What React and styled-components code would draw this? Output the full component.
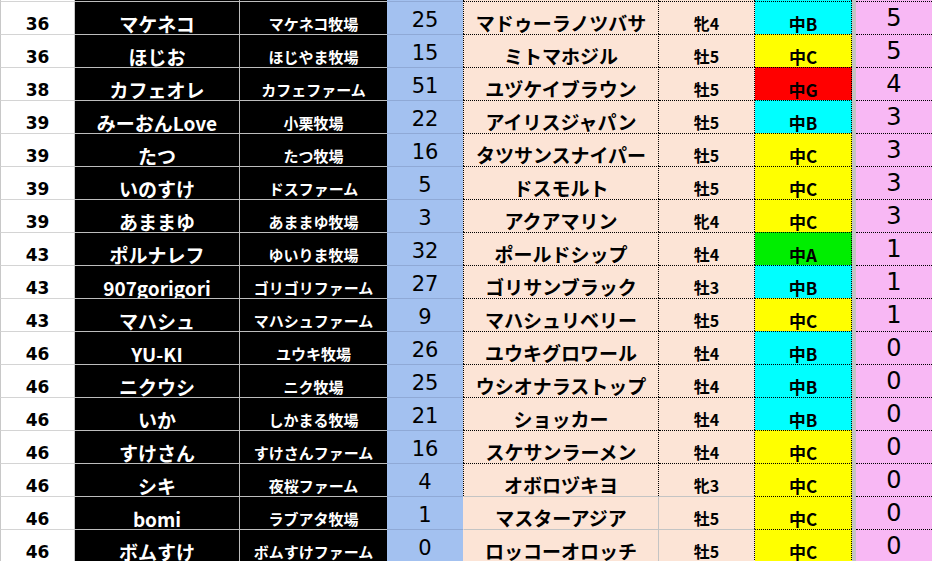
import React from 'react'
import styled, { createGlobalStyle, css } from 'styled-components'

const GlobalStyle = createGlobalStyle`
  html, body {
    margin: 0;
    padding: 0;
    background: #fff;
    overflow: hidden;
  }
`

const JP = `"Noto Sans CJK JP", "Noto Sans", sans-serif`
const NUM = `"DejaVu Sans", "Liberation Sans", sans-serif`

const gradeColors = {
  A: '#00ee00',
  B: '#00ffff',
  C: '#ffff00',
  G: '#ff0000',
}

// first entry is the sliver of the row above the visible area
const rows = [
  { rank: '', name: '', farm: '', count: '', horse: '', sex: '', grade: 'B', pts: '' },
  { rank: 36, name: 'マケネコ', farm: 'マケネコ牧場', count: 25, horse: 'マドゥーラノツバサ', sex: '牝4', grade: 'B', pts: 5 },
  { rank: 36, name: 'ほじお', farm: 'ほじやま牧場', count: 15, horse: 'ミトマホジル', sex: '牡5', grade: 'C', pts: 5 },
  { rank: 38, name: 'カフェオレ', farm: 'カフェファーム', count: 51, horse: 'ユヅケイブラウン', sex: '牡5', grade: 'G', pts: 4 },
  { rank: 39, name: 'みーおんLove', farm: '小栗牧場', count: 22, horse: 'アイリスジャパン', sex: '牡5', grade: 'B', pts: 3 },
  { rank: 39, name: 'たつ', farm: 'たつ牧場', count: 16, horse: 'タツサンスナイパー', sex: '牡5', grade: 'C', pts: 3 },
  { rank: 39, name: 'いのすけ', farm: 'ドスファーム', count: 5, horse: 'ドスモルト', sex: '牡5', grade: 'C', pts: 3 },
  { rank: 39, name: 'あままゆ', farm: 'あままゆ牧場', count: 3, horse: 'アクアマリン', sex: '牝4', grade: 'C', pts: 3 },
  { rank: 43, name: 'ポルナレフ', farm: 'ゆいりま牧場', count: 32, horse: 'ポールドシップ', sex: '牡4', grade: 'A', pts: 1 },
  { rank: 43, name: '907gorigori', farm: 'ゴリゴリファーム', count: 27, horse: 'ゴリサンブラック', sex: '牡3', grade: 'B', pts: 1 },
  { rank: 43, name: 'マハシュ', farm: 'マハシュファーム', count: 9, horse: 'マハシュリベリー', sex: '牡5', grade: 'C', pts: 1 },
  { rank: 46, name: 'YU-KI', farm: 'ユウキ牧場', count: 26, horse: 'ユウキグロワール', sex: '牡4', grade: 'B', pts: 0 },
  { rank: 46, name: 'ニクウシ', farm: 'ニク牧場', count: 25, horse: 'ウシオナラストップ', sex: '牡4', grade: 'B', pts: 0 },
  { rank: 46, name: 'いか', farm: 'しかまる牧場', count: 21, horse: 'ショッカー', sex: '牡4', grade: 'B', pts: 0 },
  { rank: 46, name: 'すけさん', farm: 'すけさんファーム', count: 16, horse: 'スケサンラーメン', sex: '牡4', grade: 'C', pts: 0 },
  { rank: 46, name: 'シキ', farm: '夜桜ファーム', count: 4, horse: 'オボロヅキヨ', sex: '牝3', grade: 'C', pts: 0 },
  { rank: 46, name: 'bomi', farm: 'ラブアタ牧場', count: 1, horse: 'マスターアジア', sex: '牡5', grade: 'C', pts: 0, plain: true },
  { rank: 46, name: 'ボムすけ', farm: 'ボムすけファーム', count: 0, horse: 'ロッコーオロッチ', sex: '牡5', grade: 'C', pts: 0, plain: true },
]

const Sheet = styled.div`
  display: flex;
  flex-direction: column;
  margin-top: -32px;
`

const Row = styled.div`
  display: grid;
  grid-template-columns: 75px 165px 147px 76px 196px 96px 97px 4px 76px;
  grid-template-rows: 33px;
  height: 33px;
  flex: none;
`

const cell = css`
  box-sizing: border-box;
  min-height: 0;
  display: flex;
  align-items: center;
  justify-content: center;
  white-space: nowrap;
  line-height: 1;
  border-top: 1px solid transparent;
`

const RankCell = styled.div`
  ${cell};
  background: #fff;
  border-top-color: #d4d4d4;
  border-left: 1px solid #c8c8c8;
  border-right: 1px solid #c8c8c8;
  padding-top: 11px;
  font: 700 17px ${NUM};
  color: #000;
`

const NameCell = styled.div`
  ${cell};
  background: #000;
  border-top-color: #bdbdbd;
  border-right: 1px solid #bdbdbd;
  padding-top: 10px;
  font: 700 19px ${JP};
  color: #fff;
`

const FarmCell = styled.div`
  ${cell};
  background: #000;
  border-top-color: #bdbdbd;
  padding-top: 10px;
  font: 700 15px ${JP};
  color: #fff;
`

const CountCell = styled.div`
  ${cell};
  background: #a3c1f0;
  border-top-color: #8fa9d6;
  padding-top: 3px;
  font: 400 21px ${NUM};
  color: #000;
`

const peachBorders = css`
  border-top: ${(p) => (p.$plain ? '1px solid #c4c4c4' : '1px dotted #000')};
`

const HorseCell = styled.div`
  ${cell};
  ${peachBorders};
  background: #fce4d6;
  border-left: ${(p) => (p.$plain ? '1px solid transparent' : '1px dotted #000')};
  border-right: ${(p) => (p.$plain ? '1px solid #c4c4c4' : '1px dotted #000')};
  padding-top: 8px;
  font: 700 19px ${JP};
  color: #000;
`

const SexCell = styled.div`
  ${cell};
  ${peachBorders};
  background: #fce4d6;
  border-right: 1px dotted #000;
  padding-top: 9px;
  font: 700 16px ${JP};
  color: #000;
`

const GradeCell = styled.div`
  ${cell};
  background: ${(p) => gradeColors[p.$grade]};
  border-top: 1px dotted #000;
  border-right: 1px dotted #000;
  padding-top: 10px;
  font: 700 17px ${JP};
  color: #000;
`

const Divider = styled.div`
  background: #c4c4c4;
`

const PointCell = styled.div`
  ${cell};
  background: #f8b8f4;
  border-top: 1px dotted #000;
  padding-top: 0;
  font: 400 24px ${NUM};
  color: #000;
`

export default function App() {
  return (
    <>
      <GlobalStyle />
      <Sheet>
        {rows.map((r, i) => (
          <Row key={i}>
            <RankCell>{r.rank}</RankCell>
            <NameCell>{r.name}</NameCell>
            <FarmCell>{r.farm}</FarmCell>
            <CountCell>{r.count}</CountCell>
            <HorseCell $plain={r.plain}>{r.horse}</HorseCell>
            <SexCell $plain={r.plain}>{r.sex}</SexCell>
            <GradeCell $grade={r.grade}>{r.pts === '' ? '' : `中${r.grade}`}</GradeCell>
            <Divider />
            <PointCell>{r.pts}</PointCell>
          </Row>
        ))}
      </Sheet>
    </>
  )
}
